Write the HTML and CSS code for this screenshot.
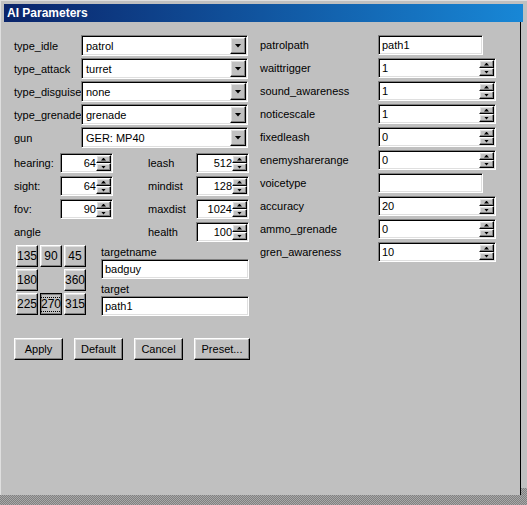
FILE: index.html
```html
<!DOCTYPE html>
<html>
<head>
<meta charset="utf-8">
<title>AI Parameters</title>
<link rel="stylesheet" href="styles.css">
</head>
<body>
<div class="win">
  <div class="title">AI Parameters</div>
  <div class="mid">
    <div class="client">
      <div class="cols">
        <div class="leftcol">
          <div class="combos">
            <label>type_idle</label>
            <div class="combo sunk"><span class="ctext">patrol</span><span class="dd raised"><i class="down7"></i></span></div>
            <label>type_attack</label>
            <div class="combo sunk"><span class="ctext">turret</span><span class="dd raised"><i class="down7"></i></span></div>
            <label>type_disguise</label>
            <div class="combo sunk"><span class="ctext">none</span><span class="dd raised"><i class="down7"></i></span></div>
            <label>type_grenade</label>
            <div class="combo sunk"><span class="ctext">grenade</span><span class="dd raised"><i class="down7"></i></span></div>
            <label>gun</label>
            <div class="combo sunk"><span class="ctext">GER: MP40</span><span class="dd raised"><i class="down7"></i></span></div>
          </div>
          <div class="spins">
            <label>hearing:</label>
            <div class="spin sunk r"><span class="val">64</span><span class="arrows"><span class="sb raised"><i class="up5"></i></span><span class="sb raised"><i class="dn5"></i></span></span></div>
            <span></span>
            <label>leash</label>
            <div class="spin sunk r"><span class="val">512</span><span class="arrows"><span class="sb raised"><i class="up5"></i></span><span class="sb raised"><i class="dn5"></i></span></span></div>

            <label>sight:</label>
            <div class="spin sunk r"><span class="val">64</span><span class="arrows"><span class="sb raised"><i class="up5"></i></span><span class="sb raised"><i class="dn5"></i></span></span></div>
            <span></span>
            <label>mindist</label>
            <div class="spin sunk r"><span class="val">128</span><span class="arrows"><span class="sb raised"><i class="up5"></i></span><span class="sb raised"><i class="dn5"></i></span></span></div>

            <label>fov:</label>
            <div class="spin sunk r"><span class="val">90</span><span class="arrows"><span class="sb raised"><i class="up5"></i></span><span class="sb raised"><i class="dn5"></i></span></span></div>
            <span></span>
            <label>maxdist</label>
            <div class="spin sunk r"><span class="val">1024</span><span class="arrows"><span class="sb raised"><i class="up5"></i></span><span class="sb raised"><i class="dn5"></i></span></span></div>

            <label class="span3">angle</label>
            <label>health</label>
            <div class="spin sunk r"><span class="val">100</span><span class="arrows"><span class="sb raised"><i class="up5"></i></span><span class="sb raised"><i class="dn5"></i></span></span></div>
          </div>
          <div class="lower">
            <div class="angles">
              <div class="ab raised">135</div>
              <div class="ab raised">90</div>
              <div class="ab raised">45</div>
              <div class="ab raised">180</div>
              <div class="ab empty"></div>
              <div class="ab raised">360</div>
              <div class="ab raised">225</div>
              <div class="ab pressed"><span class="focus">270</span></div>
              <div class="ab raised">315</div>
            </div>
            <div class="targets">
              <label class="tl1">targetname</label>
              <div class="tb sunk">badguy</div>
              <label class="tl2">target</label>
              <div class="tb sunk">path1</div>
            </div>
          </div>
        </div>
        <div class="rightcol">
          <label>patrolpath</label>
          <div class="tb sunk short">path1</div>
          <label>waittrigger</label>
          <div class="spin sunk"><span class="val">1</span><span class="arrows"><span class="sb raised"><i class="up5"></i></span><span class="sb raised"><i class="dn5"></i></span></span></div>
          <label>sound_awareness</label>
          <div class="spin sunk"><span class="val">1</span><span class="arrows"><span class="sb raised"><i class="up5"></i></span><span class="sb raised"><i class="dn5"></i></span></span></div>
          <label>noticescale</label>
          <div class="spin sunk"><span class="val">1</span><span class="arrows"><span class="sb raised"><i class="up5"></i></span><span class="sb raised"><i class="dn5"></i></span></span></div>
          <label>fixedleash</label>
          <div class="spin sunk"><span class="val">0</span><span class="arrows"><span class="sb raised"><i class="up5"></i></span><span class="sb raised"><i class="dn5"></i></span></span></div>
          <label>enemysharerange</label>
          <div class="spin sunk"><span class="val">0</span><span class="arrows"><span class="sb raised"><i class="up5"></i></span><span class="sb raised"><i class="dn5"></i></span></span></div>
          <label>voicetype</label>
          <div class="tb sunk short"></div>
          <label>accuracy</label>
          <div class="spin sunk"><span class="val">20</span><span class="arrows"><span class="sb raised"><i class="up5"></i></span><span class="sb raised"><i class="dn5"></i></span></span></div>
          <label>ammo_grenade</label>
          <div class="spin sunk"><span class="val">0</span><span class="arrows"><span class="sb raised"><i class="up5"></i></span><span class="sb raised"><i class="dn5"></i></span></span></div>
          <label>gren_awareness</label>
          <div class="spin sunk"><span class="val">10</span><span class="arrows"><span class="sb raised"><i class="up5"></i></span><span class="sb raised"><i class="dn5"></i></span></span></div>
        </div>
      </div>
      <div class="btns">
        <div class="btn raised">Apply</div>
        <div class="btn raised">Default</div>
        <div class="btn raised">Cancel</div>
        <div class="btn raised wide">Preset...</div>
      </div>
    </div>
    <div class="gutter"><div class="grip"></div></div>
  </div>
  <div class="dither"></div>
</div>
</body>
</html>
```

FILE: styles.css
```css
* { box-sizing: border-box; }
body {
  margin: 0;
  background: #c0c0c0;
  font: 11px "Liberation Sans", Arial, sans-serif;
  color: #000;
}
.win {
  width: 527px;
  height: 505px;
  display: flex;
  flex-direction: column;
  border-top: 1px solid #dfdfdf;
  border-left: 1px solid #dfdfdf;
}
.title {
  margin: 3px 4px 0 3px;
  height: 18px;
  background: linear-gradient(90deg, #0a246a, #1887d6);
  color: #fff;
  font-weight: bold;
  font-size: 12px;
  line-height: 18px;
  padding-left: 3px;
  flex: none;
}
.mid {
  display: flex;
  flex: 1;
}
.client {
  width: 520px;
  border-right: 1px solid #000;
  padding: 13px 0 0 13px;
}
.gutter {
  flex: 1;
  display: flex;
  flex-direction: column;
  justify-content: flex-end;
}
.grip, .dither {
  background-color: #808080;
  background-image: repeating-conic-gradient(#a8a8a8 0 25%, #808080 0 50%);
  background-size: 2px 2px;
}
.grip { height: 7px; }
.dither { height: 10px; flex: none; margin-left: -1px; }

label {
  display: flex;
  align-items: center;
  white-space: nowrap;
}
.cols { display: flex; }
.leftcol { width: 235px; }

.raised {
  border: 1px solid;
  border-color: #fff #000 #000 #fff;
  box-shadow: inset -1px -1px 0 #808080, inset 1px 1px 0 #dfdfdf;
  background: #c0c0c0;
}
.sunk {
  border: 1px solid;
  border-color: #808080 #fff #fff #808080;
  box-shadow: inset 1px 1px 0 #000, inset -1px -1px 0 #dfdfdf;
  background: #fff;
}

.combos {
  display: grid;
  grid-template-columns: 67px 167px;
  grid-auto-rows: 21px;
  row-gap: 2px;
}
.combo {
  height: 21px;
  padding: 1px;
  display: flex;
  align-items: center;
}
.ctext { flex: 1; padding-left: 3px; }
.dd {
  width: 16px;
  height: 17px;
  display: flex;
  align-items: center;
  justify-content: center;
}
.down7 {
  display: block;
  width: 7px;
  height: 4px;
  background: #000;
  clip-path: polygon(0 0, 100% 0, 50% 100%);
}

.spins {
  margin-top: 5px;
  display: grid;
  grid-template-columns: 46px 53px 35px 48px 53px;
  grid-auto-rows: 20px;
  row-gap: 3px;
}
.span3 { grid-column: span 3; }
.spin {
  height: 20px;
  padding: 1px;
  display: flex;
  align-items: center;
}
.val { flex: 1; padding-left: 2px; }
.spin.r .val { text-align: right; padding-right: 0; }
.arrows {
  width: 15px;
  height: 16px;
  display: flex;
  flex-direction: column;
}
.sb {
  height: 8px;
  display: flex;
  align-items: center;
  justify-content: center;
}
.up5, .dn5 {
  display: block;
  width: 5px;
  height: 3px;
  background: #000;
}
.up5 { clip-path: polygon(50% 0, 100% 100%, 0 100%); }
.dn5 { clip-path: polygon(0 0, 100% 0, 50% 100%); }

.lower {
  margin-top: 3px;
  display: flex;
}
.angles {
  margin-left: 2px;
  display: grid;
  grid-template-columns: repeat(3, 22px);
  grid-auto-rows: 22px;
  gap: 2px;
}
.ab {
  display: flex;
  align-items: center;
  justify-content: center;
  font-size: 12px;
}
.ab.pressed {
  border: 1px solid #000;
  box-shadow: inset 1px 1px 0 #808080, inset -1px -1px 0 #808080;
  padding-top: 1px;
  overflow: hidden;
}
.focus {
  outline: 1px dotted #000;
  outline-offset: 0;
  line-height: 13px;
}
.targets {
  margin-left: 15px;
  width: 148px;
  display: flex;
  flex-direction: column;
}
.tl1 { height: 14px; }
.tl2 { height: 17px; padding-top: 2px; }
.tb {
  height: 20px;
  padding: 1px 1px 1px 3px;
  display: flex;
  align-items: center;
}

.rightcol {
  margin-left: 11px;
  display: grid;
  grid-template-columns: 118px 118px;
  grid-auto-rows: 20px;
  row-gap: 3px;
  align-content: start;
}
.tb.short { width: 105px; }

.btns {
  margin-top: 22px;
  display: flex;
  gap: 11px;
}
.btn {
  width: 49px;
  height: 22px;
  display: flex;
  align-items: center;
  justify-content: center;
}
.btn.wide { width: 56px; }
```
